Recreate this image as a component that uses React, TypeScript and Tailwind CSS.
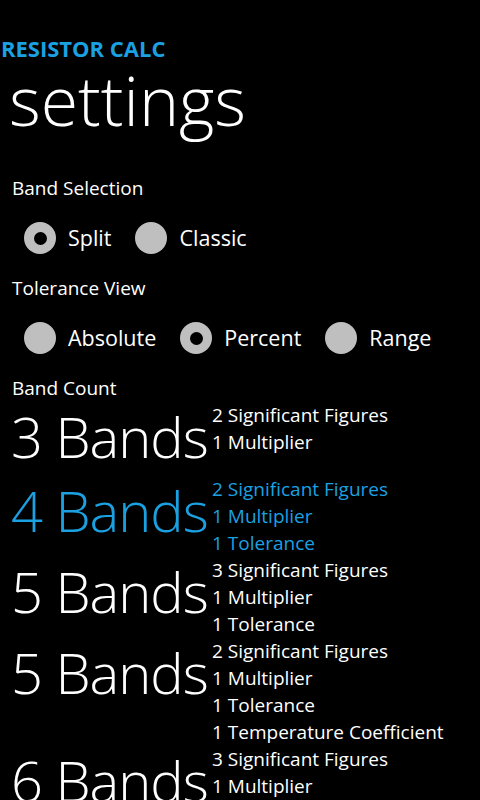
import * as React from "react";

type Band = {
    label: string;
    lines: string[];
    active?: boolean;
};

const bands: Band[] = [
    { label: "3 Bands", lines: ["2 Significant Figures", "1 Multiplier"] },
    { label: "4 Bands", lines: ["2 Significant Figures", "1 Multiplier", "1 Tolerance"], active: true },
    { label: "5 Bands", lines: ["3 Significant Figures", "1 Multiplier", "1 Tolerance"] },
    {
        label: "5 Bands",
        lines: ["2 Significant Figures", "1 Multiplier", "1 Tolerance", "1 Temperature Coefficient"],
    },
    { label: "6 Bands", lines: ["3 Significant Figures", "1 Multiplier", "1 Tolerance", "1 Temperature Coefficient"] },
];

function Radio({ label, checked, className = "" }: { label: string; checked?: boolean; className?: string }) {
    return (
        <div className={"flex items-center " + className}>
            <div className="flex h-[32px] w-[32px] items-center justify-center rounded-full bg-[#bfbfbf]">
                {checked && <div className="h-[13px] w-[13px] rounded-full bg-black" />}
            </div>
            <span className="ml-[12px] text-[21.5px] leading-[28px]">{label}</span>
        </div>
    );
}

export default function App() {
    return (
        <div className="h-[800px] w-[480px] overflow-hidden bg-black font-['Segoe_UI','Open_Sans',sans-serif] text-white">
            {/* Header */}
            <div className="pl-[1px] pt-[35px] text-[22px] font-bold leading-[26px] text-[#1ba1e2]">RESISTOR CALC</div>
            <div className="pl-[9px] text-[68px] font-light leading-[78px]">settings</div>

            {/* Band selection */}
            <div className="mt-[37px] pl-[12px] text-[19px] leading-[24px]">Band Selection</div>
            <div className="mt-[22px] flex pl-[24px]">
                <Radio label="Split" checked />
                <Radio label="Classic" className="ml-[24px]" />
            </div>

            {/* Tolerance view */}
            <div className="mt-[22px] pl-[12px] text-[19px] leading-[24px]">Tolerance View</div>
            <div className="mt-[22px] flex pl-[24px]">
                <Radio label="Absolute" />
                <Radio label="Percent" checked className="ml-[24px]" />
                <Radio label="Range" className="ml-[24px]" />
            </div>

            {/* Band count */}
            <div className="mt-[22px] pl-[12px] text-[19px] leading-[24px]">Band Count</div>
            <div className="mt-[2px] flex flex-col">
                {bands.map((b, i) => (
                    <div
                        key={i}
                        className={"flex min-h-[74px] " + (b.active ? "text-[#1ba1e2]" : "text-white")}
                    >
                        <div className="w-[212px] shrink-0 pl-[11px] text-[56px] font-light leading-[68px] tracking-[-1px] whitespace-nowrap">
                            {b.label}
                        </div>
                        <div className="flex flex-col text-[19px] leading-[27px] whitespace-nowrap">
                            {b.lines.map((l, j) => (
                                <span key={j}>{l}</span>
                            ))}
                        </div>
                    </div>
                ))}
            </div>
        </div>
    );
}
